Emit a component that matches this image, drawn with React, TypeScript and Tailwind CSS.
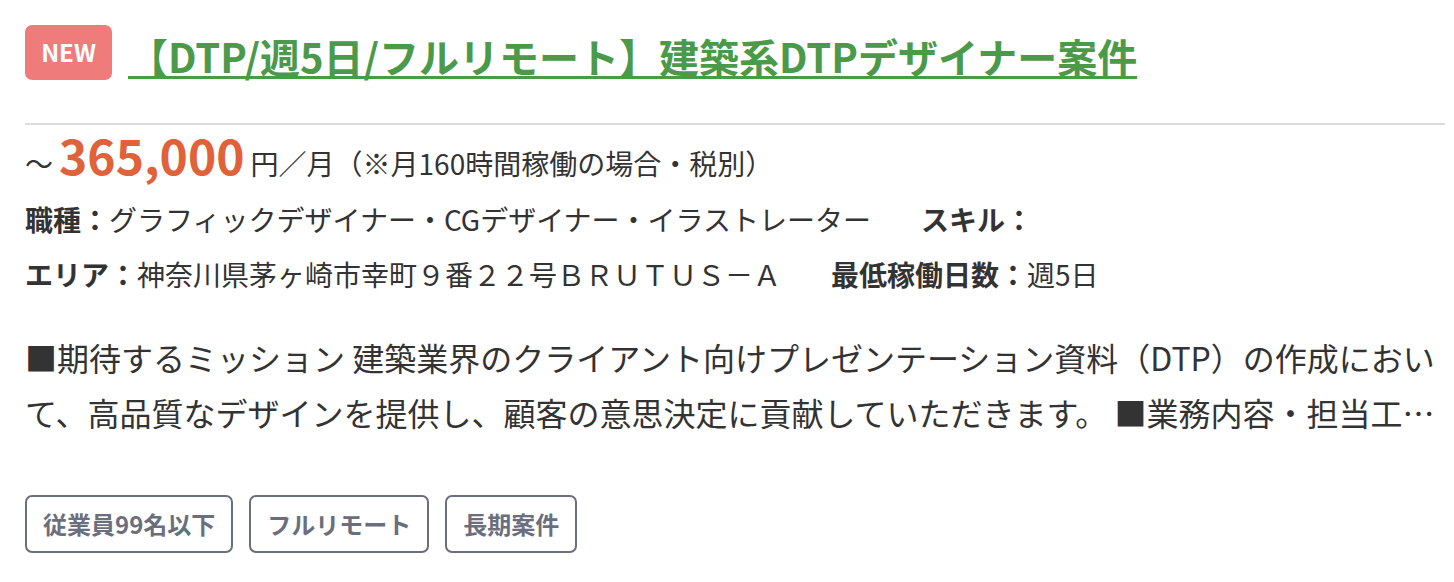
import React from 'react';

const tags = ['従業員99名以下', 'フルリモート', '長期案件'];

const App = () => {
  return (
    <div className="w-[1454px] h-[582px] bg-white pl-[25px] pr-[9px] pt-[24px] text-[#333] font-['Noto_Sans_CJK_JP','Noto_Sans',sans-serif]">
      <div className="flex items-center gap-4">
        <span className="flex h-[55px] w-[87px] items-center justify-center rounded-[7px] bg-[#f07b7b] text-[24px] font-bold text-white">
          NEW
        </span>
        <a href="#" className="mt-[8px] text-[40px] leading-[48px] font-bold text-[#4b9a49] underline decoration-[3px] underline-offset-[3px]">
          【DTP/週5日/フルリモート】建築系DTPデザイナー案件
        </a>
      </div>

      <div className="mt-[43px] border-t-2 border-[#dcdcdc]" />

      <div className="flex items-baseline">
        <span className="text-[28px]">〜</span>
        <span className="ml-[6px] text-[48px] leading-[58px] font-bold text-[#e0623a]">365,000</span>
        <span className="ml-[6px] text-[28px]">円／月（※月160時間稼働の場合・税別）</span>
      </div>

      <div className="mt-[8px] flex gap-[50px] text-[28px] leading-[55px]">
        <p>
          <span className="font-bold">職種：</span>グラフィックデザイナー・CGデザイナー・イラストレーター
        </p>
        <p>
          <span className="font-bold">スキル：</span>
        </p>
      </div>
      <div className="flex gap-[50px] text-[28px] leading-[55px]">
        <p>
          <span className="font-bold">エリア：</span>神奈川県茅ヶ崎市幸町９番２２号ＢＲＵＴＵＳ－Ａ
        </p>
        <p>
          <span className="font-bold">最低稼働日数：</span>週5日
        </p>
      </div>

      <p className="mt-[28px] text-[32px] leading-[55px] line-clamp-2">
        ■期待するミッション 建築業界のクライアント向けプレゼンテーション資料（DTP）の作成において、高品質なデザインを提供し、顧客の意思決定に貢献していただきます。 ■業務内容・担当工程 DTPデザイン業務全般
      </p>

      <div className="mt-[55px] flex gap-4">
        {tags.map((t) => (
          <span
            key={t}
            className="flex h-[58px] items-center rounded-[7px] border-2 border-[#6b6f7d] px-[16px] text-[24px] font-bold text-[#6b6f7d]"
          >
            {t}
          </span>
        ))}
      </div>
    </div>
  );
};

export default App;
